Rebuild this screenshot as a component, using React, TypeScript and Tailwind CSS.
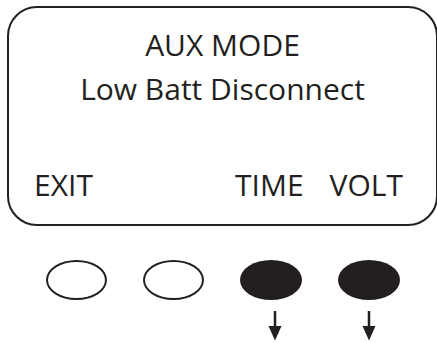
import React from "react";

const ink = "#231f20";

const Arrow = () => (
  <svg width="14" height="30" viewBox="0 0 14 30">
    <rect x="5.75" y="0" width="2.5" height="17" fill={ink} />
    <polygon points="0.5,15 13.5,15 7,29.5" fill={ink} />
  </svg>
);

const App = () => {
  return (
    <div className="w-[437px] h-[343px] bg-white overflow-hidden font-['Open_Sans',sans-serif] text-[#231f20]">
      {/* display */}
      <div className="ml-[7px] mt-[6px] w-[431px] h-[220px] border-2 border-[#231f20] rounded-[30px] flex flex-col pt-[22px]">
        <div className="text-center text-[30px] leading-[30px]">AUX MODE</div>
        <div className="text-center text-[30px] leading-[30px] mt-[14px]">
          Low Batt Disconnect
        </div>
        <div className="mt-auto mb-[24px] flex items-center pl-[25px] pr-[33px] text-[30px] leading-[30px]">
          <span>EXIT</span>
          <span className="ml-auto">TIME</span>
          <span className="ml-[26px]">VOLT</span>
        </div>
      </div>

      {/* keys */}
      <div className="flex ml-[46px] mt-[34px] gap-[36px]">
        <div className="w-[61px] h-[40px] rounded-[50%] border-2 border-[#231f20]" />
        <div className="w-[61px] h-[40px] rounded-[50%] border-2 border-[#231f20]" />
        <div className="w-[62px] h-[40px] rounded-[50%] bg-[#231f20]" />
        <div className="w-[62px] h-[40px] rounded-[50%] bg-[#231f20]" />
      </div>

      <div className="flex ml-[268px] mt-[11px] gap-[80px]">
        <Arrow />
        <Arrow />
      </div>
    </div>
  );
};

export default App;
